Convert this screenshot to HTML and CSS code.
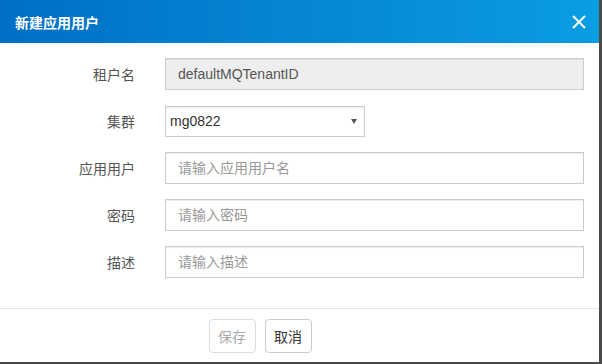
FILE: index.html
```html
<!DOCTYPE html>
<html lang="zh">
<head>
    <meta charset="UTF-8">
    <title>新建应用用户</title>
    <link rel="stylesheet" href="styles.css">
</head>
<body>
    <div class="modal">
        <div class="modal-header">
            <h4 class="modal-title">新建应用用户</h4>
            <button class="close" type="button" aria-label="关闭">
                <svg width="14" height="14" viewBox="0 0 14 14">
                    <path d="M1 1 L13 13 M13 1 L1 13" stroke="#fff" stroke-width="2" fill="none"/>
                </svg>
            </button>
        </div>

        <form class="modal-body">
            <div class="form-group">
                <label>租户名</label>
                <input type="text" class="form-control" value="defaultMQTenantID" disabled>
            </div>
            <div class="form-group">
                <label>集群</label>
                <div class="select-wrap">
                    <select class="form-control select">
                        <option>mg0822</option>
                    </select>
                    <span class="caret"></span>
                </div>
            </div>
            <div class="form-group">
                <label>应用用户</label>
                <input type="text" class="form-control" placeholder="请输入应用用户名">
            </div>
            <div class="form-group">
                <label>密码</label>
                <input type="password" class="form-control" placeholder="请输入密码">
            </div>
            <div class="form-group">
                <label>描述</label>
                <input type="text" class="form-control" placeholder="请输入描述">
            </div>
        </form>

        <div class="modal-footer">
            <button class="btn" type="button" disabled>保存</button>
            <button class="btn" type="button">取消</button>
        </div>
    </div>
</body>
</html>
```

FILE: styles.css
```css
* {
    margin: 0;
    padding: 0;
    box-sizing: border-box;
    font-family: 'Liberation Sans', 'Noto Sans CJK SC', sans-serif;
}

body {
    background-color: #4b4b4b;
    width: 602px;
    height: 364px;
    overflow: hidden;
}

.modal {
    width: 599px;
    height: 362px;
    background-color: #fff;
    display: flex;
    flex-direction: column;
}

.modal-header {
    height: 43px;
    background: linear-gradient(90deg, #006fc4, #0a9de2);
    display: flex;
    align-items: center;
    justify-content: space-between;
    padding: 0 12px 0 15px;
}

.modal-title {
    color: #fff;
    font-size: 14px;
    font-weight: bold;
}

.close {
    background: none;
    border: none;
    width: 16px;
    height: 16px;
    display: flex;
    align-items: center;
    justify-content: center;
    cursor: pointer;
}

.modal-body {
    flex: 1;
    padding: 15px 15px 0 0;
}

.form-group {
    display: flex;
    align-items: center;
    height: 32px;
    margin-bottom: 15px;
}

label {
    width: 135px;
    margin-right: 30px;
    text-align: right;
    font-size: 14px;
    color: #555;
}

.form-control {
    flex: 1;
    height: 32px;
    padding: 0 12px;
    border: 1px solid #ccc;
    font-size: 14px;
    color: #333;
    background-color: #fff;
    box-shadow: inset 0 1px 1px rgba(0, 0, 0, 0.075);
    outline: none;
}

.form-control::placeholder {
    color: #999;
}

.form-control:disabled {
    background-color: #eee;
    color: #555;
}

.select-wrap {
    position: relative;
    width: 200px;
    height: 31px;
}

.select {
    width: 100%;
    height: 31px;
    padding: 0 4px;
    appearance: none;
    -webkit-appearance: none;
    border-radius: 0;
}

.caret {
    position: absolute;
    right: 8px;
    top: 13px;
    border-left: 3px solid transparent;
    border-right: 3px solid transparent;
    border-top: 5px solid #555;
}

.modal-footer {
    height: 54px;
    border-top: 1px solid #e5e5e5;
    display: flex;
    align-items: center;
    justify-content: center;
    gap: 9px;
    padding-right: 79px;
}

.btn {
    width: 47px;
    height: 34px;
    border: 1px solid #ccc;
    border-radius: 4px;
    background-color: #fff;
    font-size: 14px;
    color: #333;
    cursor: pointer;
}

.btn:disabled {
    color: #aaa;
    border-color: #ddd;
    cursor: not-allowed;
}
```
